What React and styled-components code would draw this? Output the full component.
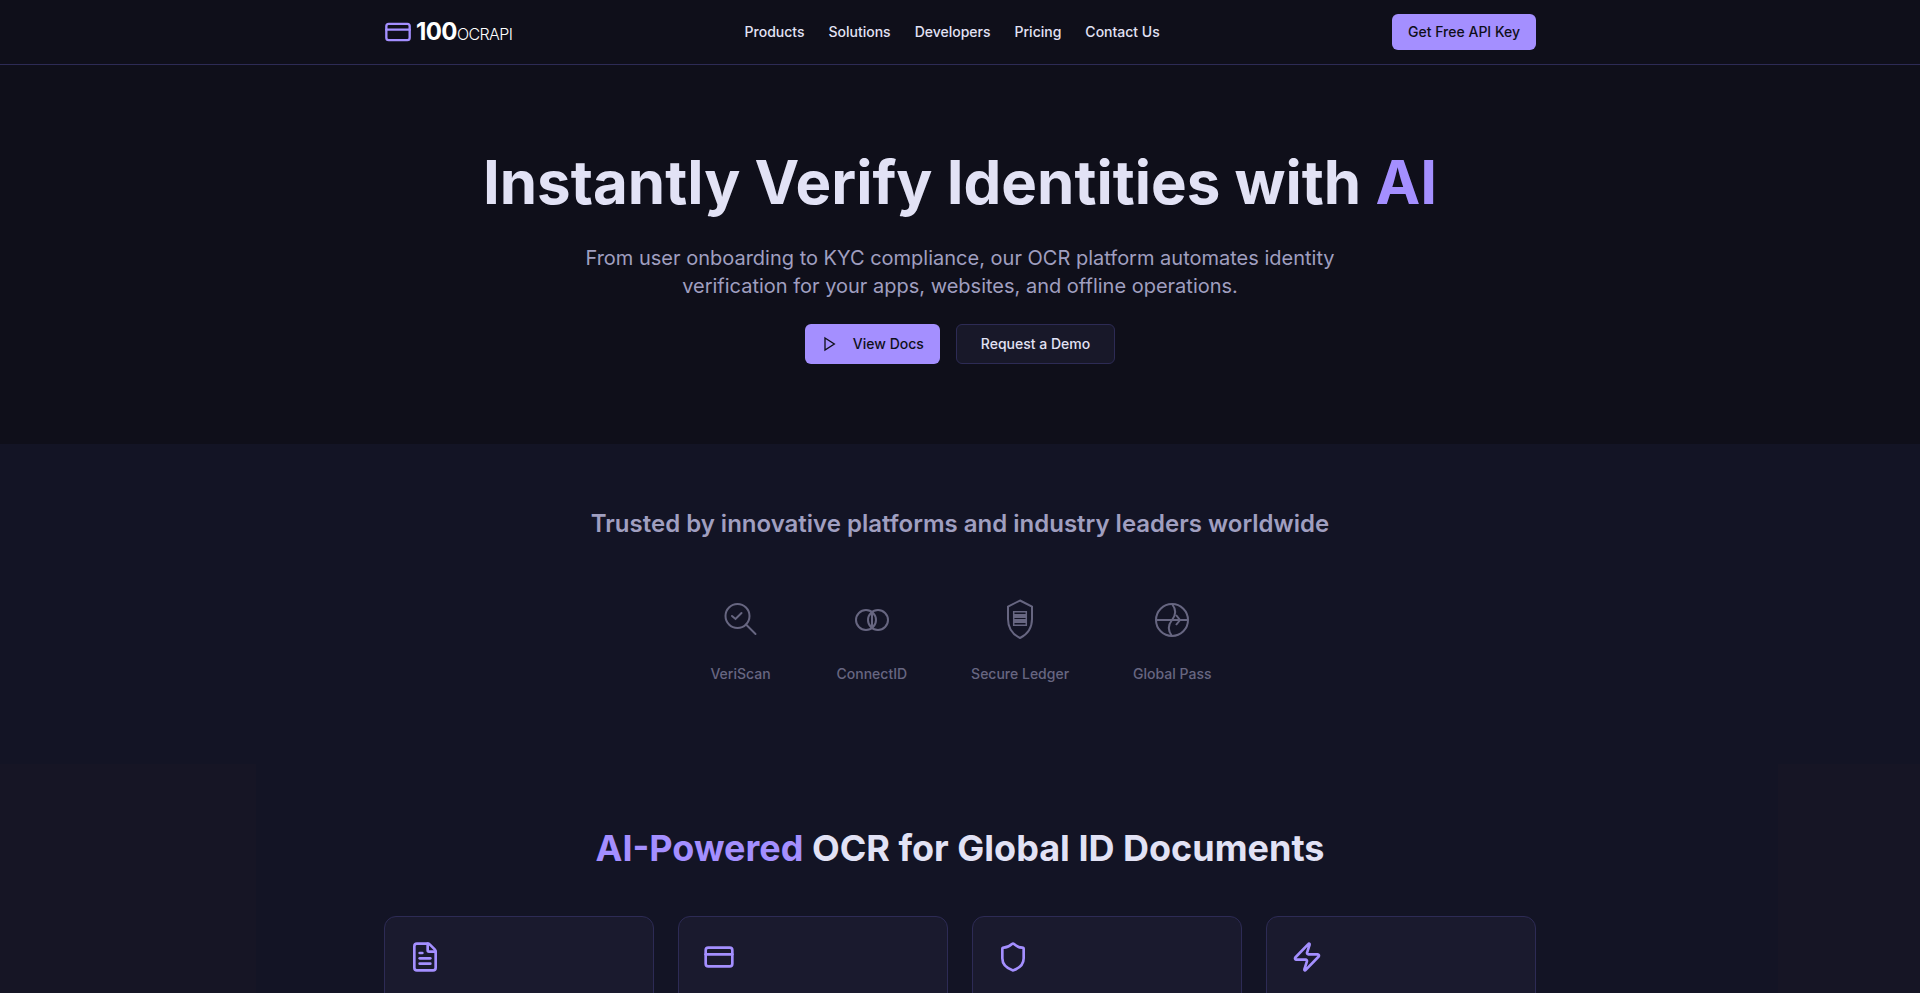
import styled, { createGlobalStyle } from "styled-components";
import { CreditCard, FileText, Shield, Zap } from "lucide-react";

const NAV_ITEMS = ["Products", "Solutions", "Developers", "Pricing", "Contact Us"];

const FEATURES = [
    { name: "Document OCR", icon: FileText },
    { name: "ID cards", icon: CreditCard },
    { name: "Security", icon: Shield },
    { name: "Speed", icon: Zap },
];

const PlayIcon = () => (
    <svg width="16" height="16" viewBox="0 0 24 24" fill="none" stroke="currentColor" strokeWidth="2" aria-hidden="true">
        <polygon points="6 3 20 12 6 21" />
    </svg>
);

const VeriScanIcon = () => (
    <PartnerSvg viewBox="0 0 64 64" aria-hidden="true">
        <circle cx="28.5" cy="28" r="12" />
        <path strokeLinecap="round" d="M37 36.5l9.5 9.5" />
        <path strokeLinecap="round" d="M23 28l3.5 3 6-6" />
    </PartnerSvg>
);

const ConnectIcon = () => (
    <PartnerSvg viewBox="0 0 64 64" aria-hidden="true">
        <circle cx="26" cy="32" r="10" />
        <circle cx="38" cy="32" r="10" />
        <path d="M32 25v14" />
    </PartnerSvg>
);

const LedgerIcon = () => (
    <PartnerSvg viewBox="0 0 64 64" aria-hidden="true">
        <path d="M32 12.5l12 6V31c0 9-5 15.5-12 19-7-3.5-12-10-12-19V18.5z" />
        <path strokeWidth="1.5" d="M25.7 23.7h12.6v13.6H25.7z" />
        <path fill="#676681" stroke="none" d="M25 26h14v4H25zM25 31h14v4H25z" />
    </PartnerSvg>
);

const GlobalIcon = () => (
    <PartnerSvg viewBox="0 0 64 64" aria-hidden="true">
        <circle cx="32" cy="32" r="16" />
        <path d="M16 32h32M36 27l4 5-4 5" />
        <path d="M32 16c4 5 4 11 0 16s-4 11 0 16" />
    </PartnerSvg>
);

const PARTNERS = [
    { name: "VeriScan", icon: VeriScanIcon },
    { name: "ConnectID", icon: ConnectIcon },
    { name: "Secure Ledger", icon: LedgerIcon },
    { name: "Global Pass", icon: GlobalIcon },
];

const App = () => {
    return (
        <>
            <GlobalStyle />
            <Header>
                <HeaderInner>
                    <Logo href="#">
                        <CreditCard size={28} color="#a48fff" />
                        <LogoText>
                            100<LogoSuffix>OCRAPI</LogoSuffix>
                        </LogoText>
                    </Logo>
                    <Nav>
                        {NAV_ITEMS.map((item) => (
                            <NavLink key={item} href="#">{item}</NavLink>
                        ))}
                    </Nav>
                    <KeyButton type="button">Get Free API Key</KeyButton>
                </HeaderInner>
            </Header>

            <main>
                <Hero>
                    <HeroTitle>
                        Instantly Verify Identities with <Accent>AI</Accent>
                    </HeroTitle>
                    <HeroText>
                        From user onboarding to KYC compliance, our OCR platform automates identity
                        verification for your apps, websites, and offline operations.
                    </HeroText>
                    <Actions>
                        <DocsButton type="button">
                            <PlayIcon />
                            View Docs
                        </DocsButton>
                        <DemoButton type="button">Request a Demo</DemoButton>
                    </Actions>
                </Hero>

                <Trusted>
                    <TrustedTitle>
                        Trusted by innovative platforms and industry leaders worldwide
                    </TrustedTitle>
                    <PartnerList>
                        {PARTNERS.map(({ name, icon: Icon }) => (
                            <Partner key={name}>
                                <Icon />
                                {name}
                            </Partner>
                        ))}
                    </PartnerList>
                </Trusted>

                <Features>
                    <Container>
                        <FeaturesTitle>
                            <Accent>AI-Powered</Accent> OCR for Global ID Documents
                        </FeaturesTitle>
                        <CardGrid>
                            {FEATURES.map(({ name, icon: Icon }) => (
                                <Card key={name} aria-label={name}>
                                    <Icon size={32} color="#a48fff" />
                                </Card>
                            ))}
                        </CardGrid>
                    </Container>
                </Features>
            </main>
        </>
    );
};

export default App;

const GlobalStyle = createGlobalStyle`
    * {
        box-sizing: border-box;
    }

    html {
        scrollbar-width: none;
    }

    body {
        margin: 0;
        background: #131425;
        color: #e2e2f5;
        font-family: Inter, "Liberation Sans", sans-serif;
    }
`;

const Container = styled.div`
    width: 100%;
    max-width: 1200px;
    margin: 0 auto;
    padding: 0 24px;
`;

const Header = styled.header`
    background: #0f0f1a;
    border-bottom: 1px solid #2d2b55;
`;

const HeaderInner = styled(Container)`
    display: flex;
    align-items: center;
    justify-content: space-between;
    height: 64px;
`;

const Logo = styled.a`
    display: flex;
    align-items: center;
    gap: 4px;
    color: #ffffff;
    text-decoration: none;
`;

const LogoText = styled.span`
    font-size: 24px;
    font-weight: 700;
    line-height: 32px;
    letter-spacing: -0.025em;
`;

const LogoSuffix = styled.span`
    font-size: 16px;
    font-weight: 300;
    line-height: 16px;
`;

const Nav = styled.nav`
    display: flex;
    gap: 24px;
`;

const NavLink = styled.a`
    font-size: 14px;
    font-weight: 500;
    line-height: 20px;
    color: #e2e2f5;
    text-decoration: none;
`;

const Button = styled.button`
    display: inline-flex;
    align-items: center;
    justify-content: center;
    height: 40px;
    padding: 0 16px;
    border: 0;
    border-radius: 6px;
    font-family: inherit;
    font-size: 14px;
    font-weight: 500;
    line-height: 20px;
    background: #a48fff;
    color: #0f0f1a;
    cursor: pointer;
`;

const KeyButton = styled(Button)`
    height: 36px;
`;

const DocsButton = styled(Button)`
    gap: 16px;
`;

const DemoButton = styled(Button)`
    padding: 0 24px;
    border: 1px solid #2d2b55;
    background: #181829;
    color: #e2e2f5;
`;

const Hero = styled.section`
    display: flex;
    flex-direction: column;
    align-items: center;
    padding: 80px 24px;
    background: #0f0f1a;
    text-align: center;
`;

const HeroTitle = styled.h1`
    margin: 0 0 24px;
    font-size: 60px;
    font-weight: 700;
    line-height: 75px;
    color: #e2e2f5;
`;

const Accent = styled.span`
    color: #a48fff;
`;

const HeroText = styled.p`
    max-width: 768px;
    margin: 0 0 24px;
    font-size: 20px;
    line-height: 28px;
    color: #a09fc0;
`;

const Actions = styled.div`
    display: flex;
    gap: 16px;
`;

const Trusted = styled.section`
    padding: 64px 24px 80px;
    text-align: center;
`;

const TrustedTitle = styled.h2`
    margin: 0 0 48px;
    font-size: 24px;
    font-weight: 600;
    line-height: 32px;
    color: #a09fc0;
`;

const PartnerList = styled.ul`
    display: flex;
    flex-wrap: wrap;
    justify-content: center;
    gap: 64px;
    margin: 0;
    padding: 0;
    list-style: none;
`;

const Partner = styled.li`
    display: flex;
    flex-direction: column;
    align-items: center;
    gap: 12px;
    font-size: 14px;
    font-weight: 500;
    line-height: 20px;
    color: #676681;
`;

const PartnerSvg = styled.svg`
    width: 64px;
    height: 64px;
    fill: none;
    stroke: #676681;
    stroke-width: 2px;
`;

/* faint tinted bands along both edges of the section */
const Features = styled.section`
    padding: 64px 0;
    background:
        linear-gradient(#161525, #161525) left / 256px 100% no-repeat,
        linear-gradient(#161525, #161525) right / 142px 100% no-repeat;
`;

const FeaturesTitle = styled.h2`
    margin: 0 0 48px;
    font-size: 36px;
    font-weight: 700;
    line-height: 40px;
    color: #e2e2f5;
    text-align: center;
`;

const CardGrid = styled.div`
    display: grid;
    grid-template-columns: repeat(4, 1fr);
    gap: 24px;
`;

const Card = styled.article`
    min-height: 240px;
    padding: 24px;
    border: 1px solid #2d2b55;
    border-radius: 12px;
    background: #1a1a2e;
`;
